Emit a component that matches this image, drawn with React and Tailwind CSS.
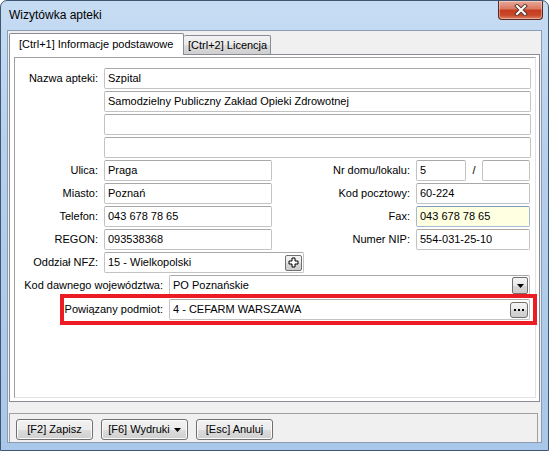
import React from 'react';

const FONT = "font-['Liberation_Sans',Arial,sans-serif]";

const FIELD_CLASS =
  'flex h-[21px] items-center rounded-[2px] border pl-[3px] text-[11px] text-black';

const BUTTON_CLASS =
  'flex h-[21px] items-center justify-center rounded-[3px] border border-[#707070] bg-[linear-gradient(180deg,#f2f2f2_0%,#ebebeb_50%,#dddddd_51%,#cfcfcf_100%)] text-[11px] text-black shadow-[inset_0_0_0_1px_#fcfcfc]';

function Field({ className = '', tone = 'border-[#c3c3c3] border-t-[#a9a9a9] bg-white', children, value }) {
  return (
    <div className={`${FIELD_CLASS} ${tone} ${className}`}>
      <span className="flex-1 truncate">{value}</span>
      {children}
    </div>
  );
}

function Label({ className = '', children }) {
  return <div className={`shrink-0 pr-[6px] text-right text-[11px] leading-[21px] text-black ${className}`}>{children}</div>;
}

function MiniButton({ className = '', children }) {
  return (
    <div
      className={`mr-[1px] flex shrink-0 items-center justify-center rounded-[2px] border border-[#707070] bg-[linear-gradient(180deg,#f4f4f4_0%,#e8e8e8_50%,#d8d8d8_51%,#cdcdcd_100%)] ${className}`}
    >
      {children}
    </div>
  );
}

function PlusIcon() {
  return (
    <svg width="11" height="11" viewBox="0 0 11 11">
      <path d="M4 1h3v3h3v3H7v3H4V7H1V4h3z" fill="#fff" stroke="#000" strokeWidth="1" />
    </svg>
  );
}

function CloseButton() {
  return (
    <div className="flex h-[19px] w-[45px] items-center justify-center rounded-b-[4px] border border-t-0 border-[#5a2a22] bg-[linear-gradient(180deg,#e9a99b_0%,#d8775f_45%,#c7391c_50%,#c94a2c_80%,#e28466_100%)] shadow-[inset_0_0_0_1px_rgba(255,255,255,0.35)]">
      <svg width="14" height="12" viewBox="0 0 14 12">
        <path d="M3 2l8 8M11 2l-8 8" stroke="#5b3a33" strokeWidth="4" strokeLinecap="square" />
        <path d="M3 2l8 8M11 2l-8 8" stroke="#fff" strokeWidth="2" strokeLinecap="square" />
      </svg>
    </div>
  );
}

export default function App() {
  return (
    <div className={`${FONT} relative flex h-[451px] w-[549px] flex-col overflow-hidden rounded-t-[7px] border border-[#3f5670] bg-[linear-gradient(180deg,#c6dcf3_0%,#b5cfec_35%,#a9c7e9_100%)]`}>
      {/* title bar */}
      <div className="flex h-[29px] shrink-0 items-start justify-between">
        <div className="pl-[8px] pt-[7px] text-[12px] leading-[15px] text-black">Wizytówka apteki</div>
        <div className="mr-[5px]">
          <CloseButton />
        </div>
      </div>

      {/* client area */}
      <div className="mx-[6px] flex h-[413px] flex-col border border-[#8c9db3] bg-[#f0f0f0] pt-[1px]">
        {/* tabs */}
        <div className="relative z-10 flex h-[22px] items-end pl-[1px]">
          <div className="mb-[-1px] flex h-[22px] w-[175px] items-center rounded-t-[2px] border border-b-0 border-[#898c95] bg-white pl-[9px] text-[11px] text-black">
            [Ctrl+1] Informacje podstawowe
          </div>
          <div className="flex h-[19px] w-[87px] items-center rounded-t-[2px] border border-b-0 border-l-0 border-[#898c95] bg-[linear-gradient(180deg,#f2f2f2_0%,#ebebeb_50%,#dddddd_51%,#cfcfcf_100%)] pl-[4px] text-[11px] text-black">
            [Ctrl+2] Licencja
          </div>
        </div>

        {/* tab panel */}
        <div className="ml-[1px] mr-[1px] flex h-[348px] flex-col border border-[#898c95] bg-white pb-[3px] pl-[4px] pr-[3px] pt-[2px]">
          <div className="flex flex-1 flex-col gap-[2px] border border-[#a0a0a0] border-b-[#e3e3e3] border-r-[#e3e3e3] pt-[10px]">
            <div className="flex">
              <Label className="w-[89px]">Nazwa apteki:</Label>
              <Field className="w-[427px]" value="Szpital" />
            </div>
            <div className="flex">
              <div className="w-[89px] shrink-0" />
              <Field className="w-[427px]" value="Samodzielny Publiczny Zakład Opieki Zdrowotnej" />
            </div>
            <div className="flex">
              <div className="w-[89px] shrink-0" />
              <Field className="w-[427px]" value="" />
            </div>
            <div className="flex">
              <div className="w-[89px] shrink-0" />
              <Field className="w-[427px]" value="" />
            </div>

            <div className="flex">
              <Label className="w-[89px]">Ulica:</Label>
              <Field className="w-[168px]" value="Praga" />
              <Label className="w-[144px]">Nr domu/lokalu:</Label>
              <Field className="w-[50px]" value="5" />
              <div className="w-[16px] text-center text-[11px] leading-[21px]">/</div>
              <Field className="w-[48px]" value="" />
            </div>
            <div className="flex">
              <Label className="w-[89px]">Miasto:</Label>
              <Field className="w-[168px]" value="Poznań" />
              <Label className="w-[144px]">Kod pocztowy:</Label>
              <Field className="w-[114px]" value="60-224" />
            </div>
            <div className="flex">
              <Label className="w-[89px]">Telefon:</Label>
              <Field className="w-[168px]" value="043 678 78 65" />
              <Label className="w-[144px]">Fax:</Label>
              <Field className="w-[114px]" tone="border-[#a4bbd4] border-t-[#7f9bbb] bg-[#ffffe1]" value="043 678 78 65" />
            </div>
            <div className="flex">
              <Label className="w-[89px]">REGON:</Label>
              <Field className="w-[168px]" value="093538368" />
              <Label className="w-[144px]">Numer NIP:</Label>
              <Field className="w-[114px]" value="554-031-25-10" />
            </div>

            <div className="flex">
              <Label className="w-[89px]">Oddział NFZ:</Label>
              <Field className="w-[200px]" value="15 - Wielkopolski">
                <MiniButton className="h-[16px] w-[17px]">
                  <PlusIcon />
                </MiniButton>
              </Field>
            </div>

            <div className="flex">
              <Label className="w-[154px]">Kod dawnego województwa:</Label>
              <Field className="w-[361px]" value="PO Poznańskie">
                <MiniButton className="h-[17px] w-[16px]">
                  <svg width="7" height="4" viewBox="0 0 7 4">
                    <path d="M0 0h7L3.5 4z" fill="#000" />
                  </svg>
                </MiniButton>
              </Field>
            </div>

            <div className="-mt-[4px] ml-[45px] flex w-[477px] border-[4px] border-[#ed1c24] py-[1px]">
              <Label className="w-[105px]">Powiązany podmiot:</Label>
              <Field className="w-[361px]" value="4 - CEFARM WARSZAWA">
                <MiniButton className="h-[16px] w-[18px] rounded-[3px]">
                  <svg width="10" height="2" viewBox="0 0 10 2">
                    <rect x="0" y="0" width="2" height="2" fill="#000" />
                    <rect x="4" y="0" width="2" height="2" fill="#000" />
                    <rect x="8" y="0" width="2" height="2" fill="#000" />
                  </svg>
                </MiniButton>
              </Field>
            </div>
          </div>
        </div>

        {/* bottom button bar */}
        <div className="ml-[1px] mr-[3px] mt-[11px] flex flex-1 items-start gap-[8px] border border-b-0 border-[#a0a0a0] pl-[6px] pt-[5px]">
          <div className={`${BUTTON_CLASS} w-[77px]`}>[F2] Zapisz</div>
          <div className={`${BUTTON_CLASS} w-[87px] gap-[4px]`}>
            <span>[F6] Wydruki</span>
            <svg width="7" height="4" viewBox="0 0 7 4">
              <path d="M0 0h7L3.5 4z" fill="#000" />
            </svg>
          </div>
          <div className={`${BUTTON_CLASS} w-[77px]`}>[Esc] Anuluj</div>
        </div>
      </div>
    </div>
  );
}
